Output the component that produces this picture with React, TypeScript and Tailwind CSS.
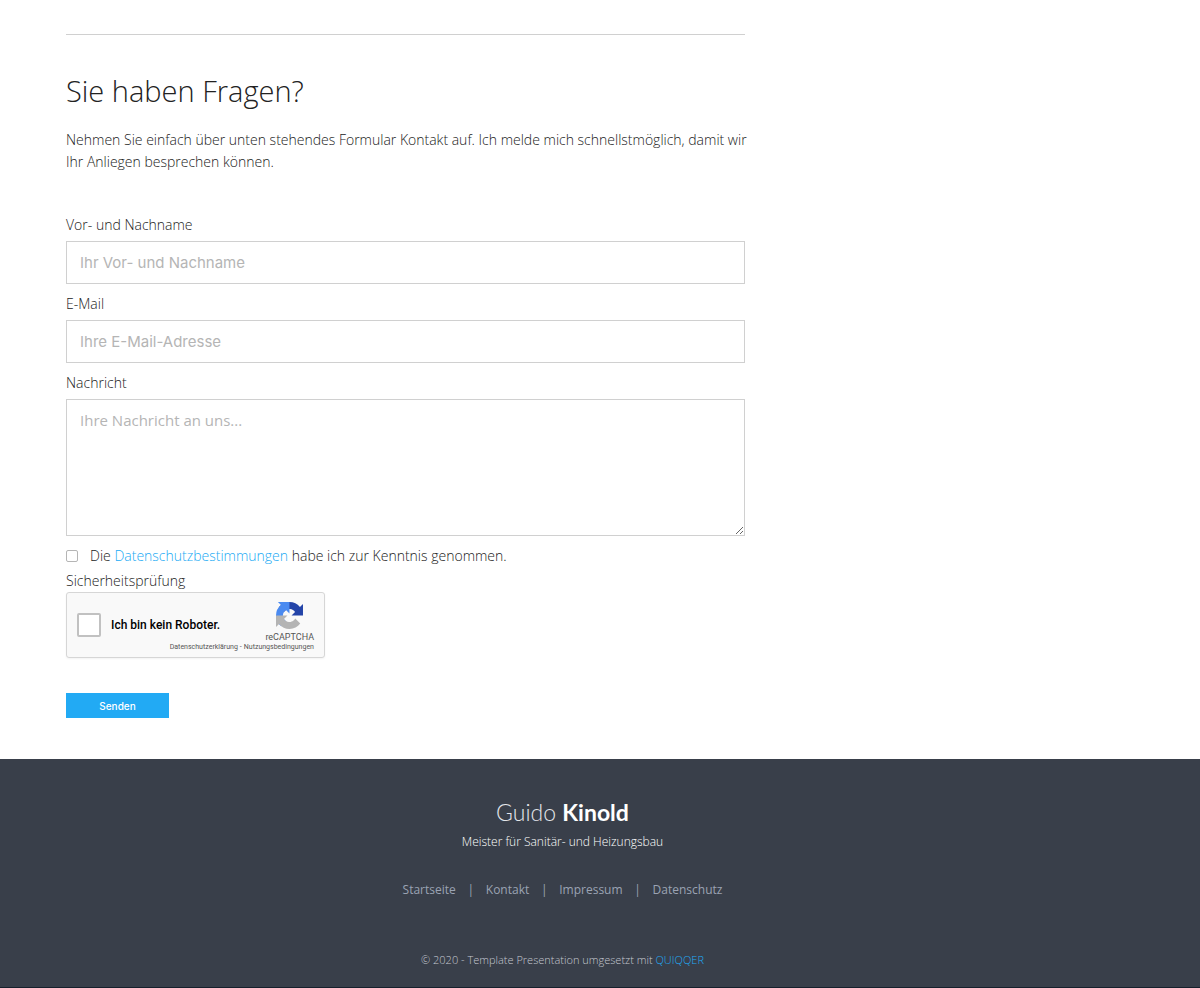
import React from 'react';

interface FieldProps {
    id: string;
    label: string;
    children: React.ReactNode;
}

const FOOTER_LINKS = ['Startseite', 'Kontakt', 'Impressum', 'Datenschutz'];

const FIELD_CLASS = 'block w-full border border-[#d0d0d0] bg-white px-[13px] text-[15px] font-normal text-[#333] placeholder:text-[#b5b5b5] outline-none focus:border-[#22aaf4]';

const Field: React.FC<FieldProps> = ({ id, label, children }) => (
    <div className="flex flex-col">
        <label htmlFor={id} className="h-8 leading-8">{label}</label>
        {children}
    </div>
);

const RecaptchaLogo: React.FC = () => (
    <svg viewBox="0 0 64 64" className="size-[27px]" aria-hidden="true">
        <path fill="#2444a8" d="M64 31.96c0-.46-.01-.92-.03-1.37V4.57l-7.2 7.2A31.9 31.9 0 0 0 32.06.04c-10.4 0-19.65 4.97-25.48 12.67l11.79 11.91a15.6 15.6 0 0 1 4.77-5.36c2.06-1.6 4.97-2.92 9-2.92.48 0 .86.06 1.13.16 5 .4 9.33 3.15 11.88 7.15l-8.35 8.35L64 31.96" />
        <path fill="#4a8af0" d="M31.86.04c-.46 0-.91.01-1.37.03H4.55l7.19 7.2A31.9 31.9 0 0 0 0 31.98c0 10.4 4.97 19.65 12.67 25.48l11.91-11.79a15.6 15.6 0 0 1-5.36-4.77c-1.6-2.06-2.92-4.97-2.92-9 0-.48.06-.86.16-1.13.4-5 3.15-9.33 7.15-11.88l8.35 8.35L31.86.04" />
        <path fill="#b4b4b4" d="M0 31.98c0 .46.01.92.03 1.37v26.02l7.2-7.2A31.9 31.9 0 0 0 31.94 63.9c10.4 0 19.65-4.97 25.48-12.67L45.63 39.32a15.6 15.6 0 0 1-4.77 5.36c-2.06 1.6-4.97 2.92-9 2.92-.48 0-.86-.06-1.13-.16-5-.4-9.33-3.15-11.88-7.15l8.35-8.35L0 31.98" />
    </svg>
);

const Recaptcha: React.FC = () => (
    <div className="flex items-start justify-between w-[259px] h-[66px] border border-[#d6d6d6] rounded-[3px] bg-[#f9f9f9] shadow-xs pl-[10px] font-[Roboto,sans-serif]">
        <div className="flex items-center gap-[10px] h-16">
            <input id="robot" type="checkbox" className="appearance-none size-6 shrink-0 border-2 border-[#c1c1c1] rounded-[2px] bg-white checked:bg-[#4285f4]" />
            <label htmlFor="robot" className="text-xs font-medium text-black whitespace-nowrap">Ich bin kein Roboter.</label>
        </div>
        <div className="relative flex flex-col items-center pt-[9px] pr-[10px] font-normal text-[#555]">
            <RecaptchaLogo />
            <span className="text-[9px] leading-4">reCAPTCHA</span>
            <div className="absolute right-[10px] top-[50px] flex gap-[2px] text-[7px] leading-2 whitespace-nowrap">
                <a href="#privacy">Datenschutzerklärung</a>
                <span>-</span>
                <a href="#terms">Nutzungsbedingungen</a>
            </div>
        </div>
    </div>
);

const ContactForm: React.FC = () => (
    <form className="mt-9" onSubmit={(e) => e.preventDefault()}>
        <div className="flex flex-col gap-1">
            <Field id="name" label="Vor- und Nachname">
                <input id="name" type="text" placeholder="Ihr Vor- und Nachname" className={`${FIELD_CLASS} h-[43px] font-[Inter,sans-serif]`} />
            </Field>
            <Field id="email" label="E-Mail">
                <input id="email" type="email" placeholder="Ihre E-Mail-Adresse" className={`${FIELD_CLASS} h-[43px] font-[Inter,sans-serif]`} />
            </Field>
            <Field id="message" label="Nachricht">
                <textarea id="message" placeholder="Ihre Nachricht an uns..." className={`${FIELD_CLASS} h-[137px] py-[9px] resize`} />
            </Field>
        </div>
        <div className="flex items-center gap-3 h-7 mt-[6px]">
            <input id="terms" type="checkbox" className="appearance-none size-3 border border-[#b5b5b5] rounded-[2px] bg-white checked:bg-[#22aaf4]" />
            <label htmlFor="terms">
                Die <a href="#datenschutz" className="text-[#22aaf4]">Datenschutzbestimmungen</a> habe ich zur Kenntnis genommen.
            </label>
        </div>
        <p>Sicherheitsprüfung</p>
        <Recaptcha />
        <button type="submit" className="block w-[103px] h-[25px] mt-[35px] bg-[#22aaf4] text-[10px] font-medium text-white font-[Inter,sans-serif]">
            Senden
        </button>
    </form>
);

const Footer: React.FC = () => (
    <footer className="flex flex-col items-center mt-[41px] pt-[37px] pr-[75px] pb-[17px] bg-[#393f4a] border-b border-[#16202c] text-white">
        <div className="font-[Lato,sans-serif] text-[23px] leading-8 font-light text-[#e4e6ea]">
            Guido <strong className="font-bold text-white">Kinold</strong>
        </div>
        <p className="mt-1 text-xs leading-5 text-white">Meister für Sanitär- und Heizungsbau</p>
        <nav className="flex mt-7 text-xs leading-5 font-normal text-[#9ba3b3]">
            {FOOTER_LINKS.map((link, i) => (
                <React.Fragment key={link}>
                    {i > 0 && <span className="w-[30px] text-center">|</span>}
                    <a href={`#${link.toLowerCase()}`}>{link}</a>
                </React.Fragment>
            ))}
        </nav>
        <p className="mt-[50px] text-[11px] leading-5 text-[#c4c8d0]">
            © 2020 - Template Presentation umgesetzt mit <a href="#quiqqer" className="text-[#22aaf4]">QUIQQER</a>
        </p>
    </footer>
);

const App: React.FC = () => {
    return (
        <div className="bg-white font-['Open_Sans',sans-serif] text-sm leading-[22px] font-light text-[#222]">
            <main className="pl-[66px] pr-[75px] pt-[34px]">
                <div className="w-full max-w-[679px]">
                    <hr className="border-[#d0d0d0]" />
                    <h1 className="mt-9 text-[29px] leading-10 font-light">Sie haben Fragen?</h1>
                    <p className="mt-[18px] -mr-2">
                        Nehmen Sie einfach über unten stehendes Formular Kontakt auf. Ich melde mich schnellstmöglich, damit wir Ihr Anliegen besprechen können.
                    </p>
                    <ContactForm />
                </div>
            </main>
            <Footer />
        </div>
    );
};

export default App;
